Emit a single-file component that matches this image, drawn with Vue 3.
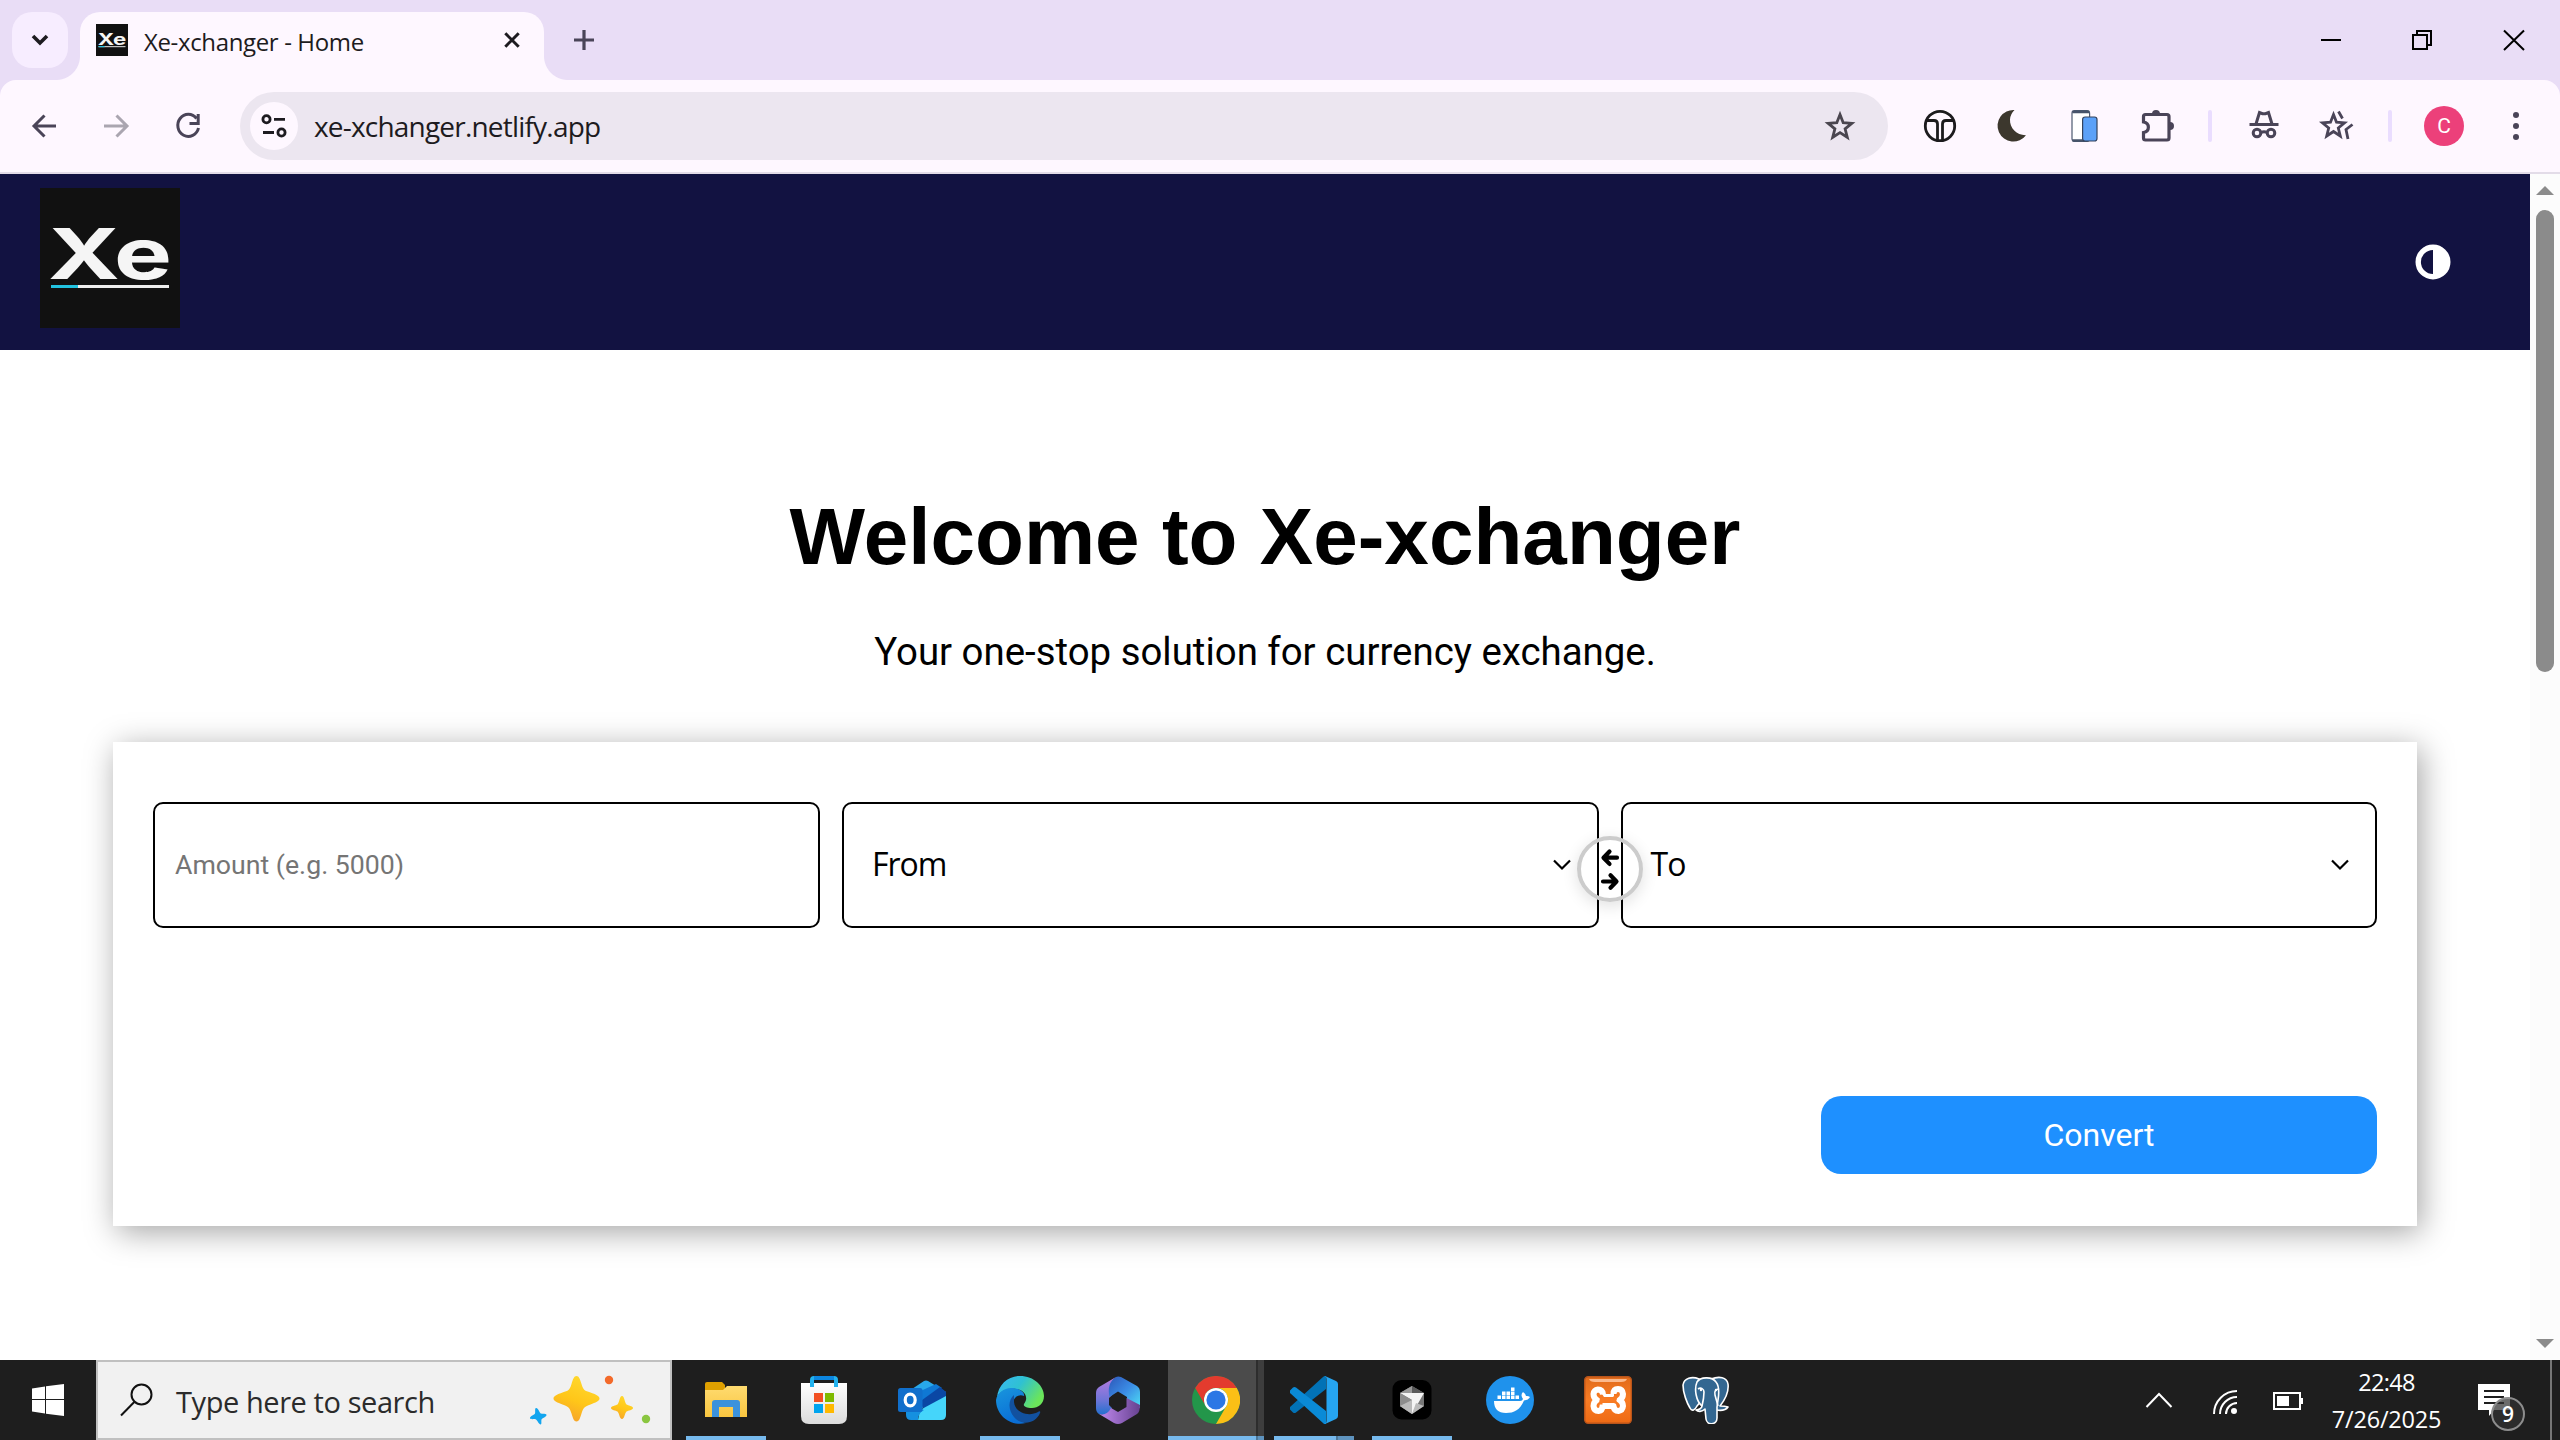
<script setup>
const apps = [
  { name: 'files', state: 'open' },
  { name: 'store', state: '' },
  { name: 'outlook', state: '' },
  { name: 'edge', state: 'open' },
  { name: 'm365', state: '' },
  { name: 'chrome', state: 'active' },
  { name: 'vscode', state: 'open stacked' },
  { name: 'cursor', state: 'open' },
  { name: 'docker', state: '' },
  { name: 'xampp', state: '' },
  { name: 'postgres', state: '' },
]
</script>

<template>
  <div class="screen">
    <header class="tabstrip">
      <button class="tab-search">
        <svg width="20" height="14" viewBox="0 0 20 14"><path d="M3 3l7 7 7-7" fill="none" stroke="#1d1b20" stroke-width="3.6" /></svg>
      </button>
      <div class="tab">
        <svg class="favicon" viewBox="0 0 140 140">
          <rect width="140" height="140" fill="#111" />
          <text x="8" y="91" textLength="72" lengthAdjust="spacingAndGlyphs" class="mark">X</text>
          <text x="74" y="91" textLength="58" lengthAdjust="spacingAndGlyphs" class="mark">e</text>
          <path d="M11 99h118" stroke="#ccc" stroke-width="5" /><path d="M11 99h27" stroke="#22c3e0" stroke-width="5" />
        </svg>
        <span class="tab-title">Xe-xchanger - Home</span>
        <svg class="tab-close" width="16" height="16" viewBox="0 0 16 16"><path d="M1.3 1.3l13.4 13.4M14.7 1.3L1.3 14.7" stroke="#1d1b20" stroke-width="3" /></svg>
      </div>
      <svg class="new-tab" width="20" height="20" viewBox="0 0 20 20"><path d="M10 0v20M0 10h20" stroke="#4a4458" stroke-width="3.2" /></svg>
      <div class="window-buttons">
        <svg width="92" height="80" viewBox="0 0 92 80"><path d="M37 40h20" stroke="#000" stroke-width="2" /></svg>
        <svg width="92" height="80" viewBox="0 0 92 80"><path d="M37 35h14v14H37zM41 35v-4h14v14h-4" fill="none" stroke="#000" stroke-width="2" /></svg>
        <svg width="92" height="80" viewBox="0 0 92 80"><path d="M36 30.500l20 19.500M56 30.500L36 50" stroke="#000" stroke-width="2" /></svg>
      </div>
    </header>

    <div class="toolbar-wrap">
      <div class="toolbar">
        <nav class="nav">
          <svg viewBox="0 0 72 68"><path d="M56 34H34M44.500 23.500L34 34l10.500 10.500" transform="translate(-8)" fill="none" stroke="#4a4458" stroke-width="3" /></svg>
          <svg viewBox="0 0 72 68"><path d="M24 34h22M36.500 23.500L47 34 36.500 44.500" fill="none" stroke="#aaa5b0" stroke-width="3" /></svg>
          <svg viewBox="0 0 72 68"><path d="M44.500 26.500A10.500 11 0 1 0 46.500 36M46.200 22v9.500H37.500" fill="none" stroke="#4a4458" stroke-width="3" /></svg>
        </nav>
        <div class="omnibox">
          <div class="site-info">
            <svg width="26" height="24" viewBox="0 0 26 24" fill="none" stroke="#1d1b20" stroke-width="2.800"><circle cx="5.500" cy="5.300" r="3.600" /><path d="M13 5.300h11M2 18.500h11" /><circle cx="20.500" cy="18.500" r="3.600" /></svg>
          </div>
          <span class="url">xe-xchanger.netlify.app</span>
          <svg class="bookmark" width="32" height="32" viewBox="0 0 32 32"><path d="M16 4.500l3.200 8.200 8.600.6-6.700 5.500 2.200 8.500L16 22.600l-7.300 4.700 2.200-8.500-6.700-5.500 8.600-.6z" fill="none" stroke="#4a464f" stroke-width="2.800" /></svg>
        </div>
        <div class="actions">
          <svg viewBox="0 0 72 68" fill="none" stroke="#1c1b1d" stroke-width="2.800"><circle cx="36" cy="34" r="14.700" /><path d="M23 28.500h7q3.500 0 3.500 3.500V48M49 28.500h-7q-3.500 0-3.500 3.500V48" /></svg>
          <svg viewBox="0 0 72 68"><path d="M38.500 18A15.800 15.800 0 1 0 50 43.200C41 43.500 33.500 36 34 27.500q.3-5.500 4.500-9.500z" fill="#3c372d" /></svg>
          <svg viewBox="0 0 72 68"><rect x="24" y="18.700" width="17.600" height="30.600" rx="2.500" fill="#fff" stroke="#4c5a70" stroke-width="1.200" /><path d="M24.500 20h16.500M24.500 48.500h12" stroke="#46536a" stroke-width="2.400" /><rect x="34.600" y="25" width="14.400" height="24" rx="2.500" fill="#5ba1f8" stroke="#34445e" stroke-width="1.200" /></svg>
          <svg viewBox="0 0 72 68"><path d="M23.500 24.500q0-2 2-2H47q2 0 2 2V46q0 2-2 2H25.500q-2 0-2-2v-5.500c6.500-1 6.500-9.500 0-10.500z" fill="none" stroke="#4a4458" stroke-width="3.200" /><path d="M32 22a4 4 0 0 1 8 0zM50 30a4 4 0 0 1 0 8z" fill="#4a4458" /></svg>
          <i class="divider"></i>
          <svg viewBox="0 0 72 68" fill="none" stroke="#4a4458" stroke-width="3"><path d="M21.500 32.500h29M28 32l3.500-11.500 3 1.200h3l3-1.200L44 32" /><circle cx="29" cy="41" r="3.800" /><circle cx="43" cy="41" r="3.800" /><path d="M33 40.500q3-1.500 6 0" /></svg>
          <svg viewBox="0 0 72 68" fill="none" stroke="#4a4458" stroke-width="2.800"><path d="M33.500 22.500l3 7.700 8 .6-6.200 5.200 2 8-6.800-4.500-6.800 4.500 2-8-6.200-5.200 8-.6z" /><path d="M38.500 19.500l4 7M52.500 32.500l-6.500 5 2 9.500" /></svg>
          <i class="divider"></i>
          <div class="avatar-slot"><span class="avatar">C</span></div>
          <svg viewBox="0 0 72 68" fill="#4a4458"><circle cx="36" cy="23" r="3" /><circle cx="36" cy="34" r="3" /><circle cx="36" cy="45" r="3" /></svg>
        </div>
      </div>
    </div>

    <main class="viewport">
      <div class="page">
        <div class="site-header">
          <svg class="logo" viewBox="0 0 140 140">
            <rect width="140" height="140" fill="#111" />
            <text x="8" y="91" textLength="72" lengthAdjust="spacingAndGlyphs" class="mark">X</text>
            <text x="74" y="91" textLength="58" lengthAdjust="spacingAndGlyphs" class="mark">e</text>
            <path d="M11 98.500h118" stroke="#eee" stroke-width="3" /><path d="M11 98.500h27" stroke="#22c3e0" stroke-width="3" />
          </svg>
          <svg class="theme" width="36" height="36" viewBox="0 0 36 36"><circle cx="18" cy="18" r="14.800" fill="none" stroke="#fff" stroke-width="5.400" /><path d="M18 4a14 14 0 0 1 0 28z" fill="#fff" /></svg>
        </div>
        <h1>Welcome to Xe-xchanger</h1>
        <p class="tagline">Your one-stop solution for currency exchange.</p>
        <section class="card">
          <div class="fields">
            <div class="field amount">Amount (e.g. 5000)</div>
            <div class="field select">
              <span>From</span>
              <svg width="18" height="12" viewBox="0 0 18 12"><path d="M1 1.500l8 8 8-8" fill="none" stroke="#000" stroke-width="2.200" /></svg>
              <div class="swap">
                <svg width="20" height="44" viewBox="0 0 20 44" fill="none" stroke="#000" stroke-width="4.200" stroke-linecap="round" stroke-linejoin="round"><path d="M17 10.700H4M9.500 4.500L3.500 10.700l6 6.200M3 34.500h13M10.500 28.200l6 6.300-6 6.200" /></svg>
              </div>
            </div>
            <div class="field select">
              <span>To</span>
              <svg width="18" height="12" viewBox="0 0 18 12"><path d="M1 1.500l8 8 8-8" fill="none" stroke="#000" stroke-width="2.200" /></svg>
            </div>
          </div>
          <button class="convert">Convert</button>
        </section>
      </div>
      <div class="scrollbar">
        <svg width="18" height="9" viewBox="0 0 18 9"><path d="M9 0l9 9H0z" fill="#8b8b8b" /></svg>
        <div class="thumb"></div>
        <svg class="down" width="18" height="9" viewBox="0 0 18 9"><path d="M0 0h18L9 9z" fill="#8b8b8b" /></svg>
      </div>
    </main>

    <footer class="taskbar">
      <div class="start">
        <svg width="32" height="32" viewBox="0 0 32 32" fill="#fff"><path d="M0 4.500L13 2.500V15H0zM14 2.300L32 0v15H14zM0 16h13v13.500L0 27.500zM14 16h18v16l-18-2.300z" /></svg>
      </div>
      <div class="search">
        <svg class="glass" width="34" height="34" viewBox="0 0 34 34" fill="none" stroke="#111" stroke-width="2"><circle cx="21.500" cy="11.500" r="10" /><path d="M14.500 18.800L1 32.500" /></svg>
        <span>Type here to search</span>
        <svg class="sparkles" width="124" height="52" viewBox="0 0 124 52">
          <defs><linearGradient id="gold" x1=".7" y1="0" x2=".3" y2="1"><stop offset="0" stop-color="#ffd92e" /><stop offset=".55" stop-color="#ffc619" /><stop offset="1" stop-color="#f5a12c" /></linearGradient></defs>
          <path d="M46.500 2c2.500 0 3.500 3 5 8 2 6.500 3 6.500 9 8.500 5 1.700 9 3.500 9 6s-4 4-9 6c-6 2-7 3-9 9-1.500 5-2.500 8-5 8s-3.500-3-5-8c-2-6-3-7-9-9-5-2-9-3.500-9-6s4-4.300 9-6c6-2 7-2 9-8.500 1.500-5 2.500-8 5-8z" fill="url(#gold)" />
          <path d="M92 22c2.500 0 2.500 6.500 4.500 8.500 1.500 1 6.500 1.500 6.500 3.500s-5 2.500-6.500 3.500c-2 2-2 7.500-4.500 7.500s-2.500-5.500-4.500-7.500C86 36.500 81 36 81 34s5-2.500 6.500-3.500c2-2 2-8.500 4.500-8.500z" fill="url(#gold)" />
          <path d="M6 34c2-.5 3.500 5 5 5.500s5.500-.5 5.500 1.500-4.500 3-5 4.500.5 5-1 5-3-4-4.500-5-6 .5-6-1.500 4.500-3 5-4.500-.5-5 1-5.500z" fill="#12a5ef" />
          <circle cx="79" cy="6" r="4.200" fill="#f36a2a" /><circle cx="116" cy="45" r="4.200" fill="#8ac640" />
        </svg>
      </div>
      <div class="apps">
        <div v-for="a in apps" :key="a.name" class="app" :class="a.state">
          <svg v-if="a.name === 'files'" viewBox="0 0 48 48"><defs><linearGradient id="fo" x2="0" y2="1"><stop stop-color="#ffdb70" /><stop offset="1" stop-color="#f9c53f" /></linearGradient></defs><path d="M3 8q0-2 2-2h15l3 3v8H3z" fill="#dfa000" /><path d="M3 14h18l4-4h20v31H3z" fill="url(#fo)" /><path d="M10 41V27q0-3 3-3h22q3 0 3 3v14h-7V31H17v10z" fill="#3b92dc" /></svg>
          <svg v-else-if="a.name === 'store'" viewBox="0 0 48 48"><defs><linearGradient id="st" x2="0" y2="1"><stop stop-color="#fff" /><stop offset="1" stop-color="#dcdcdc" /></linearGradient></defs><path d="M1 7h46v33q0 8-8 8H9q-8 0-8-8z" fill="url(#st)" /><path d="M12 11V4q0-2 2-2h20q2 0 2 2v7" fill="none" stroke="#22b2ee" stroke-width="4" /><path d="M14 2h20" stroke="#0c86e0" stroke-width="4" /><path d="M14 17h9v9h-9z" fill="#f25022" /><path d="M25 17h9v9h-9z" fill="#7fba00" /><path d="M14 28h9v9h-9z" fill="#00a4ef" /><path d="M25 28h9v9h-9z" fill="#ffb900" /></svg>
          <svg v-else-if="a.name === 'outlook'" viewBox="0 0 48 48"><path d="M8 17L26 5q2-1 4 0l18 11v4L24 32H8z" fill="#28a8ea" /><path d="M16 18L38 8l6 4-24 16z" fill="#0f78d4" /><path d="M20 27l22-16 6 5v5L28 34z" fill="#0a47a4" /><path d="M48 20v19q0 5-5 5H20l2-10z" fill="#45d5fa" /><path d="M8 28l18 6q-6 3-6 10h-7q-5 0-5-5z" fill="#1590e0" /><rect y="12" width="24.500" height="24" rx="2.500" fill="#106fcc" /><ellipse cx="12.200" cy="24" rx="5" ry="5.800" fill="none" stroke="#fff" stroke-width="3.200" /></svg>
          <svg v-else-if="a.name === 'edge'" viewBox="0 0 48 48"><defs><linearGradient id="e1" x2="1" y2=".5"><stop stop-color="#39b8f4" /><stop offset=".5" stop-color="#2fc1d2" /><stop offset="1" stop-color="#6be55a" /></linearGradient><linearGradient id="e2" x2=".4" y2="1"><stop stop-color="#1996dd" /><stop offset="1" stop-color="#0a6fd6" /></linearGradient></defs><path d="M1 22C2 8 13 0 24 0c14 0 24 10 24 20 0 8-6 12-12 12-6 0-9-2-8-4 5-6 1-14-8-15C10 12 3 16 1 22z" fill="url(#e1)" /><path d="M0 24c1-7 8-12 15-12 9 0 14 5 13 8-6-3-12 3-11 9 0 8 7 17 13 18C14 51 0 39 0 24z" fill="url(#e2)" /><path d="M18 19c-6 5-6 15 0 22 8 10 22 6 26-4 1-2-1-2-2-1-9 5-23 1-24-10 0-3 0-5 0-7z" fill="#12519f" /></svg>
          <svg v-else-if="a.name === 'm365'" viewBox="0 0 48 48"><defs><linearGradient id="m1" x2="0" y2="1"><stop stop-color="#b77be0" /><stop offset=".6" stop-color="#6f75d8" /><stop offset="1" stop-color="#2370cf" /></linearGradient><linearGradient id="m2" x2="1" y2="1"><stop stop-color="#2c56b8" /><stop offset=".5" stop-color="#3b8ce5" /><stop offset="1" stop-color="#4fe0f4" /></linearGradient><linearGradient id="m3" x2="1" y2="0"><stop stop-color="#c18af0" /><stop offset="1" stop-color="#66418f" /></linearGradient></defs><path d="M22 1q-4 3-4 9v9l-3 3v7l3 3q-4 9-13 6-3-2-3-6V17q0-4 3-6z" fill="url(#m1)" /><path d="M22 1q2-1 5 0l16 9q3 2 3 6v16L33 25v-4l-9-5.500L15.500 21q-3-14 6.500-20z" fill="url(#m2)" /><path d="M46 29q0 7-3 9L28 47q-4 2-8 0L5 38q8 2 12-6l7 4 8.500-5v-9L46 29z" fill="url(#m3)" /></svg>
          <svg v-else-if="a.name === 'chrome'" viewBox="0 0 48 48"><circle cx="24" cy="24" r="24" fill="#23964a" /><path d="M3.200 12A24 24 0 0 1 44.800 12H24a12 12 0 0 0-10.400 18z" fill="#e33b2e" /><path d="M44.800 12A24 24 0 0 1 24 48l10.400-18A12 12 0 0 0 24 12z" fill="#fbbf16" /><circle cx="24" cy="24" r="12" fill="#fff" /><circle cx="24" cy="24" r="9.600" fill="#2b77e5" /></svg>
          <svg v-else-if="a.name === 'vscode'" viewBox="0 0 48 48"><path d="M36 0v13L6 36.500q-1.500 1-3 0l-3-3q-1-1.500 0-2.500L33 1q1.500-1.500 3-1z" fill="#0272b6" /><path d="M36 48V35L6 11.500q-1.500-1-3 0l-3 3q-1 1.500 0 2.500l33 30q1.500 1.500 3 1z" fill="#0a8ad6" /><path d="M35 0l11 5q2 1 2 3v32q0 2-2 3l-11 5q1.500-1 1.500-3V3q0-2-1.500-3z" fill="#26a5f1" /></svg>
          <svg v-else-if="a.name === 'cursor'" viewBox="0 0 48 48"><rect x="4.500" y="4" width="39" height="39.500" rx="9" fill="#000" /><path d="M24 10l12 7v13l-12 8-12-8V17z" fill="#777" /><path d="M24 10l12 7H12z" fill="#5a5a5a" /><path d="M24 10v7H12z" fill="#999" /><path d="M12 17h24L24 38V24z" fill="#f4f4f4" /><path d="M12 17l12 7v14l-12-8z" fill="#8d8d8d" /><path d="M12 30l12-6v14z" fill="#bbb" /><path d="M36 30l-8-3-4 11z" fill="#bbb" /></svg>
          <svg v-else-if="a.name === 'docker'" viewBox="0 0 48 48"><circle cx="24" cy="24" r="24" fill="#1f92ec" /><path d="M8 25h26q2.500 0 3-2-3-4 0-7 2.500 1.500 3 4 2-.5 4 1-1.500 3-6 3.500C34 34 28 37 20 37 12 37 8 33 8 25z" fill="#fff" /><path d="M11.500 19.500h3.500V23h-3.500zM16 19.500h3.500V23H16zM20.500 19.500H24V23h-3.500zM25 19.500h3.500V23H25zM29.500 19.500H33V23h-3.500zM16 15.500h3.500V19H16zM20.500 15.500H24V19h-3.500zM25 15.500h3.500V19H25zM25 11.500h3.500V15H25z" fill="#fff" /></svg>
          <svg v-else-if="a.name === 'xampp'" viewBox="0 0 48 48"><defs><linearGradient id="xa" x2="0" y2="1"><stop stop-color="#e06a1a" /><stop offset=".5" stop-color="#f97c24" /><stop offset="1" stop-color="#ee6a14" /></linearGradient></defs><rect x=".7" y=".7" width="46.600" height="46.600" rx="3.500" fill="url(#xa)" stroke="#b9541a" stroke-width="1.400" /><path d="M5 3h38q-1 3-6 3H11Q6 6 5 3z" fill="#fbb98c" /><path d="M19 18.500q-.5-5-5-5-4 .5-4.500 4.500 0 4 3.500 6-3.500 2-3.500 6 .5 5 5 5 4-.5 4-5h11q.5 5 5 5 4-.5 4.500-5 0-4-3.500-6 3.500-2 3.500-6-.5-5-5-5t-4.500 5" fill="none" stroke="#fff" stroke-width="6" stroke-linejoin="round" /><path d="M18 18h12v3H20z" fill="#fff" /><path d="M17 23.500h14M17 23.500v5M31 20v4" stroke="#f97c24" stroke-width="3" fill="none" /></svg>
          <svg v-else viewBox="0 0 48 48"><g fill="#336791" stroke="#fff" stroke-width="1.600" stroke-linejoin="round"><path d="M17 3C10 0 2 2 1 9c0 8 4 18 7 23 2 4 5 2 7-2l5-6V5z" /><path d="M29 3c8-3 16-2 17 5 1 8-4 17-8 22 3 0 5 0 8 1-2 3-6 4-12 3l-3-9z" /><path d="M15 6c3-5 15-6 19 0 4 5 3 12 2 18l-1 7v11c0 7-10 8-11 1l-1-10c-3 3-7 3-9 1 3 0 6-2 6-4-6-5-8-17-5-24z" /><path d="M16 13c3-2 6 0 6 3 0 6-1 10-2 14M37 13c-3 0-5 2-4 6l3 11" fill="none" /></g><circle cx="19" cy="14" r="1.200" fill="#fff" /><circle cx="34" cy="14" r="1.200" fill="#fff" /></svg>
        </div>
      </div>
      <div class="tray">
        <svg width="58" height="80" viewBox="0 0 58 80"><path d="M16.500 47L29 34l12.500 13" fill="none" stroke="#fff" stroke-width="2" /></svg>
        <svg width="74" height="80" viewBox="0 0 74 80"><g fill="none" stroke="#fff" stroke-width="2"><path d="M26 54a23 23 0 0 1 23-23M32 54a17 17 0 0 1 17-17M38 54a11 11 0 0 1 11-11" /></g><circle cx="46" cy="51" r="3" fill="#fff" /></svg>
        <svg width="52" height="80" viewBox="0 0 52 80"><rect x="12" y="33" width="26" height="16" fill="none" stroke="#fff" stroke-width="2" /><path d="M15 36h12v10H15zM39 38h2v6h-2z" fill="#fff" /></svg>
        <div class="clock"><span class="time">22:48</span><span class="date">7/26/2025</span></div>
        <div class="notify">
          <svg width="32" height="32" viewBox="0 0 32 32"><path d="M0 0h32v26H16l-5 6v-6H0z" fill="#fff" /><path d="M6 7h20M6 13h20M6 19h20" stroke="#1e1e1e" stroke-width="2" /></svg>
          <span class="count">9</span>
        </div>
        <i class="desktop-edge"></i>
      </div>
    </footer>
  </div>
</template>

<style>
body { margin: 0; overflow: hidden; }
</style>

<style scoped>
.screen { width: 2560px; height: 1440px; display: flex; flex-direction: column; background: #fff; font-family: "Open Sans", "Noto Sans", sans-serif; }
svg { display: block; flex: none; }
button { border: 0; padding: 0; }

.tabstrip { height: 80px; display: flex; align-items: flex-start; background: #e9ddf6; }
.tab-search { width: 56px; height: 56px; margin: 12px 12px 0; border-radius: 20px; background: #f7edff; display: flex; align-items: center; justify-content: center; }
.tab { position: relative; box-sizing: border-box; width: 464px; height: 68px; margin-top: 12px; padding: 0 24px 12px 16px; border-radius: 20px 20px 0 0; background: #fef7ff; display: flex; align-items: center; }
.tab::before, .tab::after { content: ""; position: absolute; bottom: 0; width: 24px; height: 24px; }
.tab::before { left: -24px; background: radial-gradient(circle at 0 0, transparent 23.500px, #fef7ff 24.500px); }
.tab::after { right: -24px; background: radial-gradient(circle at 100% 0, transparent 23.500px, #fef7ff 24.500px); }
.favicon { width: 32px; height: 32px; }
.mark { font-family: Inter, sans-serif; font-weight: 700; font-size: 70px; fill: #f5f5f5; }
.tab-title { margin-left: 16px; font-size: 24px; line-height: 32px; letter-spacing: -.36px; color: #1d1b20; white-space: nowrap; padding-top: 3px; }
.tab-close { margin-left: auto; }
.new-tab { margin: 30px 0 0 30px; }
.window-buttons { margin-left: auto; display: flex; }

.toolbar-wrap { height: 94px; background: #e9ddf6; }
.toolbar { box-sizing: border-box; height: 94px; padding: 12px 8px 12px; border-bottom: 2px solid #e3dce8; border-radius: 16px 16px 0 0; background: #fef7ff; display: flex; align-items: center; }
.nav, .actions { display: flex; align-items: center; }
.nav svg, .actions svg { width: 72px; height: 68px; }
.omnibox { width: 1648px; height: 68px; box-sizing: border-box; margin: 0 16px; padding: 0 32px 0 10px; border-radius: 34px; background: #ece6f0; display: flex; align-items: center; }
.site-info { width: 48px; height: 48px; border-radius: 50%; background: #fef7ff; display: flex; align-items: center; justify-content: center; }
.url { margin-left: 16px; font-size: 28px; line-height: 40px; letter-spacing: -.8px; color: #1d1b20; }
.bookmark { margin-left: auto; }
.divider { width: 4px; height: 32px; margin: 0 16px; border-radius: 2px; background: #eaddff; }
.avatar-slot { width: 72px; display: flex; justify-content: center; }
.avatar { width: 40px; height: 40px; border-radius: 50%; background: #ec407a; color: #fff; font: 21px/40px Roboto, sans-serif; text-align: center; }

.viewport { height: 1186px; display: flex; background: #fff; }
.page { width: 2530px; display: flex; flex-direction: column; align-items: center; }
.site-header { box-sizing: border-box; width: 100%; height: 176px; padding: 14px 79px 22px 40px; background: #121241; display: flex; align-items: flex-start; justify-content: space-between; }
.logo { width: 140px; height: 140px; }
.theme { margin-top: 56px; }
h1 { margin: 141px 0 0; font: 700 80px/92px "Liberation Sans", Arial, sans-serif; letter-spacing: .04px; color: #000; }
.tagline { margin: 46px 0 0; font: 38.400px/46px Roboto, sans-serif; color: #000; }
.card { box-sizing: border-box; width: 2304px; height: 484px; margin-top: 67px; padding: 60px 40px 52px; background: #fff; box-shadow: 4px 6px 30px rgba(0, 0, 0, .36); display: flex; flex-direction: column; align-items: flex-end; justify-content: space-between; }
.fields { width: 100%; display: flex; gap: 22px; }
.field { box-sizing: border-box; height: 126px; border: 2px solid #000; border-radius: 10px; display: flex; align-items: center; position: relative; }
.amount { width: 667px; padding-left: 20px; font: 26.700px/32px Roboto, sans-serif; color: #757575; }
.select { flex: 1; padding: 0 26px 0 28px; justify-content: space-between; font-size: 32px; letter-spacing: -1px; color: #000; }
.select span { padding-bottom: 3px; }
.swap { position: absolute; z-index: 1; right: -46px; top: 32px; box-sizing: border-box; width: 66px; height: 66px; border: 4px solid #ccc; border-radius: 50%; box-shadow: 0 4px 16px rgba(0, 0, 0, .12); display: flex; align-items: center; justify-content: center; }
.convert { width: 556px; height: 78px; border-radius: 20px; background: #1e90ff; color: #fff; font: 32px/78px Roboto, sans-serif; }

.scrollbar { box-sizing: border-box; width: 30px; height: 1186px; padding: 12px 0; background: #fcfcfc; display: flex; flex-direction: column; align-items: center; }
.thumb { width: 18px; height: 462px; margin-top: 15px; border-radius: 9px; background: #8b8b8b; }
.down { margin-top: auto; }

.taskbar { height: 80px; background: #1e1e1e; display: flex; }
.start { width: 96px; display: flex; align-items: center; justify-content: center; }
.search { box-sizing: border-box; width: 576px; height: 80px; border: 2px solid #c0c0c0; background: #f1f1f1; padding: 0 16px 0 22px; display: flex; align-items: center; font-size: 29px; letter-spacing: -.42px; color: #2b2b2b; }
.search span { margin-left: 22px; padding-top: 3px; }
.sparkles { margin-left: auto; margin-bottom: 1px; }
.apps { display: flex; margin-left: 5px; }
.app { box-sizing: border-box; position: relative; width: 98px; height: 80px; padding: 16px 25px; }
.app svg { width: 48px; height: 48px; position: relative; }
.open::after { content: ""; position: absolute; left: 9px; bottom: 0; width: 80px; height: 4px; background: #76b9ed; }
.stacked::after { background: linear-gradient(90deg, #76b9ed 62px, #4c7798 62px, #4c7798 64px, #5e93be 64px); }
.active { background: linear-gradient(90deg, transparent 1px, #4b4b4b 1px, #4b4b4b 89px, #2d2d2d 89px, #2d2d2d 91px, #3d3d3d 91px, #3d3d3d 97px, transparent 97px); }
.active::after { content: ""; position: absolute; left: 1px; bottom: 0; width: 96px; height: 4px; background: linear-gradient(90deg, #76b9ed 88px, #4c7798 88px, #4c7798 90px, #5e93be 90px); }
.tray { margin-left: auto; display: flex; color: #fff; }
.clock { width: 145px; display: flex; flex-direction: column; align-items: center; padding-top: 4px; font-size: 23.500px; line-height: 36px; }
.clock .time { letter-spacing: -.7px; }
.clock .date { letter-spacing: -.2px; padding-top: 1px; }
.notify { box-sizing: border-box; position: relative; width: 91px; padding: 24px 0 0 19px; }
.count { position: absolute; left: 32px; top: 37px; box-sizing: border-box; width: 34px; height: 34px; border: 2px solid #8d8d8d; border-radius: 50%; background: rgba(50, 50, 50, .72); font-size: 21px; font-weight: 600; line-height: 30px; text-align: center; }
.desktop-edge { width: 2px; margin-right: 8px; background: #767676; }
</style>
